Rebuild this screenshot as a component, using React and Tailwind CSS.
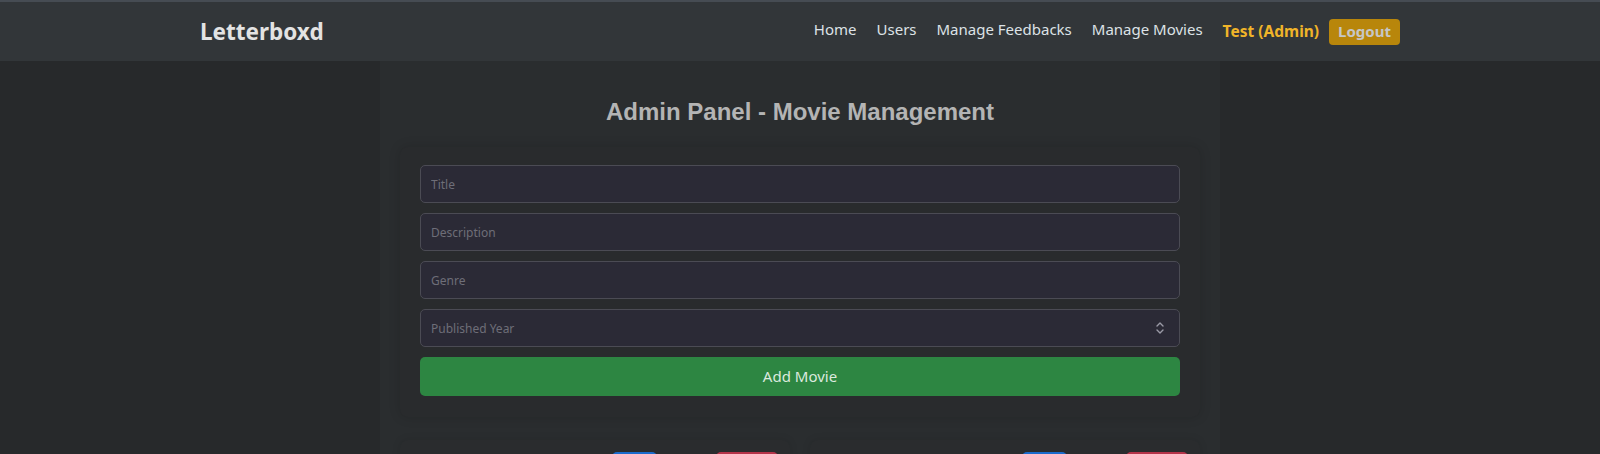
import { useState } from "react";

const movies = [
  { id: 1, title: "Inception", genre: "Sci-Fi", year: 2010 },
  { id: 2, title: "The Godfather", genre: "Crime", year: 1972 },
];

function UpDown() {
  return (
    <svg width="10" height="13" viewBox="0 0 10 13" fill="none" stroke="#9a9aa6" strokeWidth="1.4" strokeLinecap="round" strokeLinejoin="round">
      <path d="M2 4.5 L5 1.5 L8 4.5" />
      <path d="M2 8.5 L5 11.5 L8 8.5" />
    </svg>
  );
}

export default function App() {
  const [form, setForm] = useState({ title: "", description: "", genre: "", year: "" });

  const set = (k) => (e) => setForm({ ...form, [k]: e.target.value });

  const inputCls =
    "h-[38px] w-full rounded-[5px] border border-[#4b4b54] bg-[#2b2a36] px-2.5 text-[12px] text-[#d0d0d8] placeholder:text-[#6e6e78] outline-none";

  return (
    <div className="min-h-screen bg-[#27292b] font-['Noto_Sans',sans-serif]">
      <nav className="h-[61px] border-t-2 border-[#464c53] bg-[#323639]">
        <div className="mx-auto flex h-full max-w-[1200px] items-center justify-between">
          <a href="#" className="text-[22.5px] font-bold text-[#e3e3e3]">Letterboxd</a>
          <div className="flex items-center">
            <div className="mb-[5px] flex text-[15px]">
              <a href="#" className="px-2.5 text-[#dde2e6]">Home</a>
              <a href="#" className="px-2.5 text-[#dde2e6]">Users</a>
              <a href="#" className="px-2.5 text-[#dde2e6]">Manage Feedbacks</a>
              <a href="#" className="px-2.5 text-[#dde2e6]">Manage Movies</a>
            </div>
            <span className="ml-2.5 text-[15.5px] font-bold text-[#f0b429]">Test (Admin)</span>
            <button className="ml-2.5 h-[26px] rounded-[4px] bg-[#b8860b] px-[9px] text-[15px] font-bold text-[#c6c6c6]">
              Logout
            </button>
          </div>
        </div>
      </nav>

      <main className="mx-auto w-[840px] bg-[#2a2d2f] px-5 pt-[37px] pb-10">
        <h1 className="text-center font-['Liberation_Sans',Arial,sans-serif] text-2xl leading-7 font-bold text-[#b4b4b4]">
          Admin Panel - Movie Management
        </h1>

        <form
          className="mt-[21px] flex flex-col gap-2.5 rounded-lg bg-[#292b2d] px-5 pt-[18px] pb-[21px] shadow-[0_0_12px_rgba(0,0,0,0.15)]"
          onSubmit={(e) => e.preventDefault()}
        >
          <input className={inputCls} placeholder="Title" value={form.title} onChange={set("title")} />
          <input className={inputCls} placeholder="Description" value={form.description} onChange={set("description")} />
          <input className={inputCls} placeholder="Genre" value={form.genre} onChange={set("genre")} />
          <div className="relative">
            <input className={inputCls} placeholder="Published Year" value={form.year} onChange={set("year")} />
            <span className="absolute top-1/2 right-[15px] -translate-y-1/2">
              <UpDown />
            </span>
          </div>
          <button type="submit" className="h-[39px] w-full rounded-[5px] bg-[#2d8642] text-[15px] text-[#dbe9de]">
            Add Movie
          </button>
        </form>

        <div className="mt-[23px] grid grid-cols-2 gap-5">
          {movies.map((m) => (
            <div key={m.id} className="rounded-lg bg-[#2a2c2e] p-3 shadow-[0_0_8px_rgba(0,0,0,0.1)]">
              <div className="flex justify-end gap-[59px]">
                <button className="h-[31px] w-[45px] rounded-[5px] bg-[#1b6bcc] pt-3 text-sm text-white">Edit</button>
                <button className="h-[31px] w-[62px] rounded-[5px] bg-[#b5344a] pt-3 text-sm text-white">Delete</button>
              </div>
              <h3 className="mt-3 text-lg font-bold text-[#d8d8d8]">{m.title}</h3>
              <p className="text-sm text-[#9a9a9a]">
                {m.genre} · {m.year}
              </p>
            </div>
          ))}
        </div>
      </main>
    </div>
  );
}
